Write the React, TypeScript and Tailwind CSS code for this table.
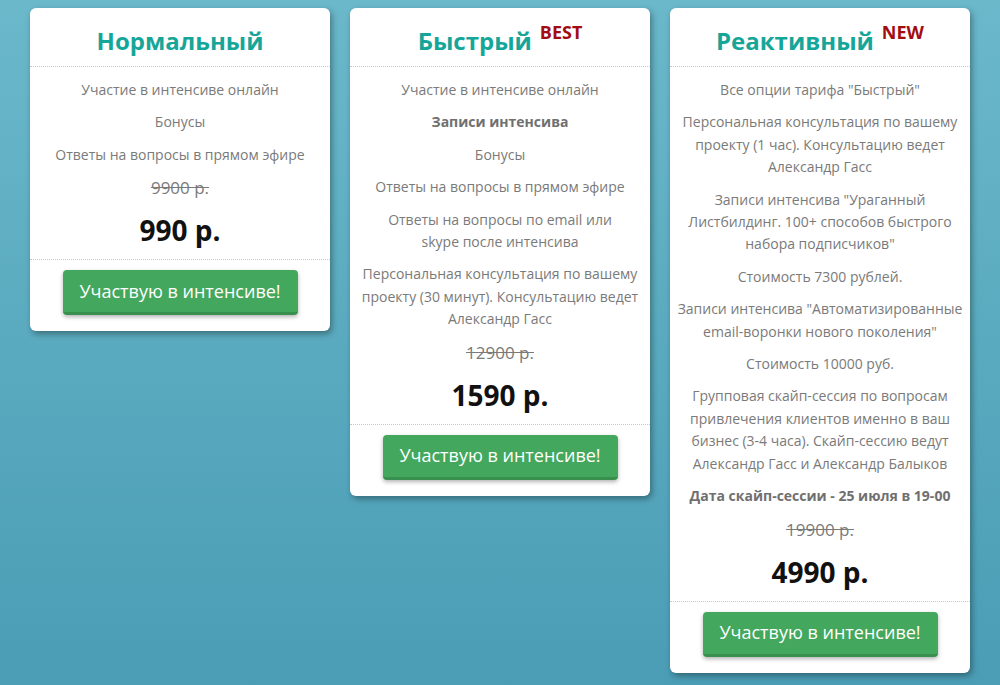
import React from "react";

type Item = { text: React.ReactNode; bold?: boolean };

type Plan = {
  title: string;
  badge?: string;
  items: Item[];
  oldPrice: string;
  price: string;
};

const plans: Plan[] = [
  {
    title: "Нормальный",
    items: [
      { text: "Участие в интенсиве онлайн" },
      { text: "Бонусы" },
      { text: "Ответы на вопросы в прямом эфире" },
    ],
    oldPrice: "9900 р.",
    price: "990 р.",
  },
  {
    title: "Быстрый",
    badge: "BEST",
    items: [
      { text: "Участие в интенсиве онлайн" },
      { text: "Записи интенсива", bold: true },
      { text: "Бонусы" },
      { text: "Ответы на вопросы в прямом эфире" },
      {
        text: (
          <>
            Ответы на вопросы по email или
            <br />
            skype после интенсива
          </>
        ),
      },
      { text: "Персональная консультация по вашему проекту (30 минут). Консультацию ведет Александр Гасс" },
    ],
    oldPrice: "12900 р.",
    price: "1590 р.",
  },
  {
    title: "Реактивный",
    badge: "NEW",
    items: [
      { text: 'Все опции тарифа "Быстрый"' },
      { text: "Персональная консультация по вашему проекту (1 час). Консультацию ведет Александр Гасс" },
      { text: 'Записи интенсива "Ураганный Листбилдинг. 100+ способов быстрого набора подписчиков"' },
      { text: "Стоимость 7300 рублей." },
      { text: 'Записи интенсива "Автоматизированные email-воронки нового поколения"' },
      { text: "Стоимость 10000 руб." },
      { text: "Групповая скайп-сессия по вопросам привлечения клиентов именно в ваш бизнес (3-4 часа). Скайп-сессию ведут Александр Гасс и Александр Балыков" },
      { text: "Дата скайп-сессии - 25 июля в 19-00", bold: true },
    ],
    oldPrice: "19900 р.",
    price: "4990 р.",
  },
];

function PlanCard({ plan }: { plan: Plan }) {
  return (
    <section className="w-[300px] shrink-0 rounded-[6px] bg-white shadow-[2px_3px_6px_rgba(0,0,0,0.35)]">
      <header className="flex items-start justify-center gap-2 border-b border-dotted border-[#c8c8c8] pt-4 pb-2">
        <h2 className="text-[24px] font-bold leading-[34px] text-[#16a699]">{plan.title}</h2>
        {plan.badge && (
          <span className="mt-[-5px] text-[18px] font-bold leading-[26px] text-[#a30d12]">{plan.badge}</span>
        )}
      </header>
      <div className="flex flex-col items-center px-1.5 pt-3 pb-[9px] text-center">
        {plan.items.map((item, index) => (
          <p
            key={index}
            className={
              item.bold
                ? "mb-[10px] text-[14px] font-bold leading-[22.4px] text-[#707070]"
                : "mb-[10px] text-[14px] leading-[22.4px] text-[#7a7a7a]"
            }
          >
            {item.text}
          </p>
        ))}
        <p className="text-[17px] leading-[24px] text-[#7a7a7a] line-through">{plan.oldPrice}</p>
        <p className="mt-[10px] text-[28px] font-bold leading-[40px] text-[#111]">{plan.price}</p>
      </div>
      <footer className="flex justify-center border-t border-dotted border-[#c8c8c8] pt-[10px] pb-4">
        <button className="h-[45px] w-[235px] rounded-[4px] border-b-[3px] border-[#388f4e] bg-[#43a85d] text-[18px] text-white shadow-[0_2px_4px_rgba(0,0,0,0.3)]">
          Участвую в интенсиве!
        </button>
      </footer>
    </section>
  );
}

export default function App() {
  return (
    <main
      className="flex min-h-screen w-full items-start gap-5 bg-linear-to-b from-[#6ab8ca] to-[#4a9db5] pl-[30px] pt-2"
      style={{ fontFamily: '"Open Sans", "Noto Sans", sans-serif' }}
    >
      {plans.map((plan) => (
        <PlanCard key={plan.title} plan={plan} />
      ))}
    </main>
  );
}
